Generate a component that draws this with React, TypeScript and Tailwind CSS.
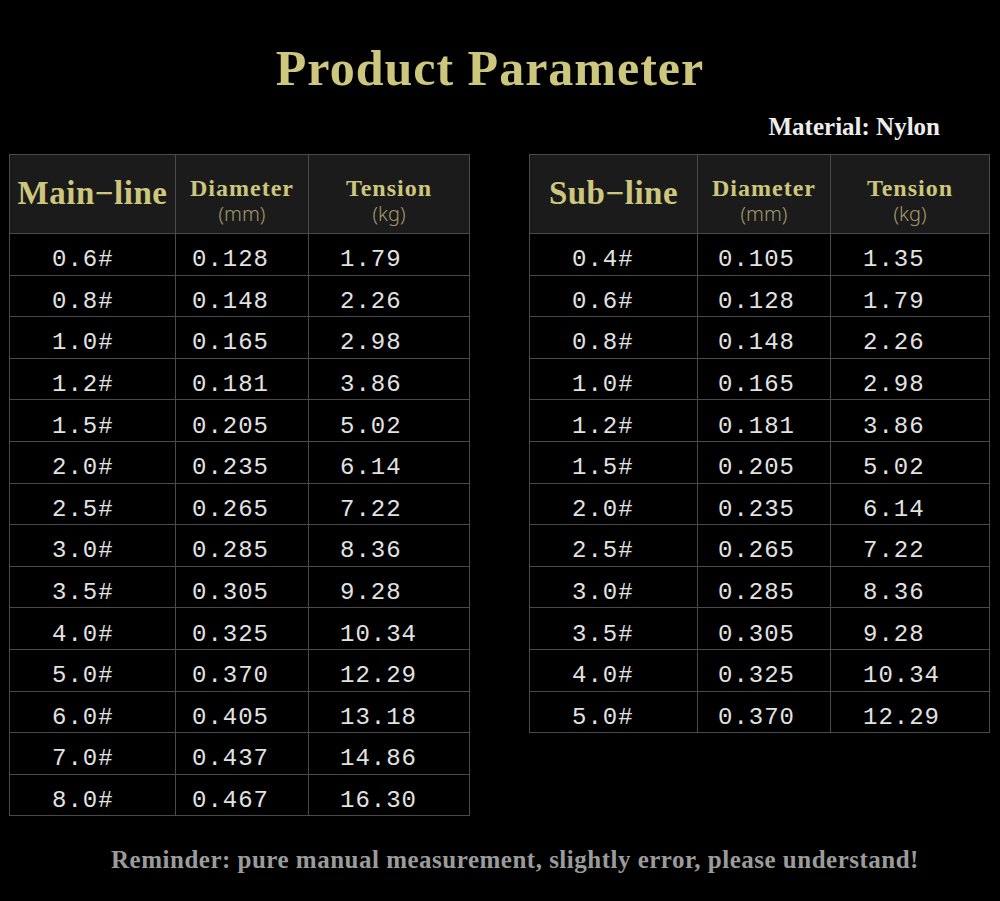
const mainRows: [string, string, string][] = [
  ["0.6#", "0.128", "1.79"],
  ["0.8#", "0.148", "2.26"],
  ["1.0#", "0.165", "2.98"],
  ["1.2#", "0.181", "3.86"],
  ["1.5#", "0.205", "5.02"],
  ["2.0#", "0.235", "6.14"],
  ["2.5#", "0.265", "7.22"],
  ["3.0#", "0.285", "8.36"],
  ["3.5#", "0.305", "9.28"],
  ["4.0#", "0.325", "10.34"],
  ["5.0#", "0.370", "12.29"],
  ["6.0#", "0.405", "13.18"],
  ["7.0#", "0.437", "14.86"],
  ["8.0#", "0.467", "16.30"],
];

const subRows: [string, string, string][] = [
  ["0.4#", "0.105", "1.35"],
  ["0.6#", "0.128", "1.79"],
  ["0.8#", "0.148", "2.26"],
  ["1.0#", "0.165", "2.98"],
  ["1.2#", "0.181", "3.86"],
  ["1.5#", "0.205", "5.02"],
  ["2.0#", "0.235", "6.14"],
  ["2.5#", "0.265", "7.22"],
  ["3.0#", "0.285", "8.36"],
  ["3.5#", "0.305", "9.28"],
  ["4.0#", "0.325", "10.34"],
  ["5.0#", "0.370", "12.29"],
];

const serif = "font-['Liberation_Serif',serif] font-bold";
const mono = "font-['Liberation_Mono',monospace]";

function ParamTable({
  title,
  rows,
  widths,
  pads,
}: {
  title: string;
  rows: [string, string, string][];
  widths: string[];
  pads: string[];
}) {
  return (
    <table className="border-collapse">
      <thead>
        <tr className="h-[79px] bg-[#1b1b1b]">
          <th className={`${widths[0]} border border-[#4a4a4a] p-0 align-middle`}>
            <span className={`${serif} text-[33px] tracking-[0.5px] text-[#cdc67d]`}>{title}</span>
          </th>
          <th className={`${widths[1]} border border-[#4a4a4a] p-0 pt-[12px] align-middle`}>
            <div className={`${serif} text-[24px] leading-[27px] tracking-[1px] text-[#cdc67d]`}>Diameter</div>
            <div className="font-['Noto_Sans',sans-serif] text-[20px] leading-[24px] text-[#a69a6c] font-light">(mm)</div>
          </th>
          <th className={`${widths[2]} border border-[#4a4a4a] p-0 pt-[12px] align-middle`}>
            <div className={`${serif} text-[24px] leading-[27px] tracking-[1px] text-[#cdc67d]`}>Tension</div>
            <div className="font-['Noto_Sans',sans-serif] text-[20px] leading-[24px] text-[#a69a6c] font-light">(kg)</div>
          </th>
        </tr>
      </thead>
      <tbody>
        {rows.map((r) => (
          <tr key={r[0]} className="h-[41.6px]">
            {r.map((v, i) => (
              <td
                key={i}
                className={`border border-[#4a4a4a] p-0 ${pads[i]} pt-[12px] ${mono} text-[24px] leading-[28px] tracking-[1px] text-[#e2e2e2]`}
              >
                {v}
              </td>
            ))}
          </tr>
        ))}
      </tbody>
    </table>
  );
}

export default function App() {
  return (
    <div className="w-[1000px] h-[901px] bg-black overflow-hidden flex flex-col">
      <h1 className={`${serif} text-[50px] leading-none tracking-[1px] text-[#cdc67d] text-center pt-[43px] mr-[20px]`}>
        Product Parameter
      </h1>
      <div className={`${serif} text-[25px] leading-none text-[#ededed] self-end mr-[60px] mt-[21px]`}>
        Material: Nylon
      </div>
      <div className="flex items-start gap-[59px] pl-[9px] mt-[15px]">
        <ParamTable
          title="Main−line"
          rows={mainRows}
          widths={["w-[166px]", "w-[133px]", "w-[161px]"]}
          pads={["pl-[42px]", "pl-[16px]", "pl-[31px]"]}
        />
        <ParamTable
          title="Sub−line"
          rows={subRows}
          widths={["w-[168px]", "w-[133px]", "w-[159px]"]}
          pads={["pl-[42px]", "pl-[20px]", "pl-[32px]"]}
        />
      </div>
      <p className={`${serif} text-[25px] leading-none tracking-[0.5px] text-[#9b9b9b] text-center mt-[31px] pl-[30px]`}>
        Reminder: pure manual measurement, slightly error, please understand!
      </p>
    </div>
  );
}
